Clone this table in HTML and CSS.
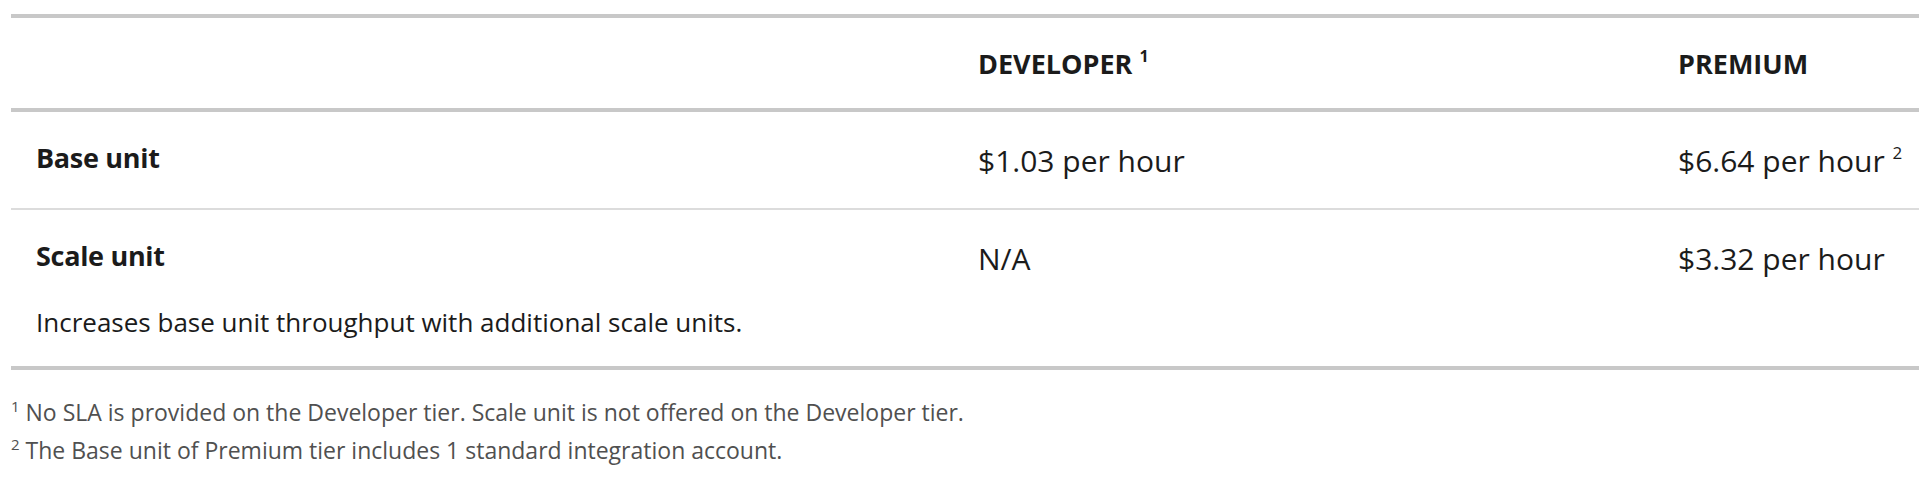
FILE: index.html
```html
<!DOCTYPE html>
<html lang="en">
<head>
<meta charset="utf-8">
<title>Pricing</title>
<link rel="stylesheet" href="styles.css">
</head>
<body>
<div class="pricing">
  <div class="row head">
    <div class="cell label"></div>
    <div class="cell tier">DEVELOPER <sup class="fn">1</sup></div>
    <div class="cell tier">PREMIUM</div>
  </div>
  <div class="row body-row thin">
    <div class="cell label"><div class="name">Base unit</div></div>
    <div class="cell value">$1.03 per hour</div>
    <div class="cell value">$6.64 per hour <sup class="fn-v">2</sup></div>
  </div>
  <div class="row body-row">
    <div class="cell label">
      <div class="name">Scale unit</div>
      <div class="desc">Increases base unit throughput with additional scale units.</div>
    </div>
    <div class="cell value">N/A</div>
    <div class="cell value">$3.32 per hour</div>
  </div>
</div>
<div class="notes">
  <p class="note"><sup>1</sup> No SLA is provided on the Developer tier. Scale unit is not offered on the Developer tier.</p>
  <p class="note"><sup>2</sup> The Base unit of Premium tier includes 1 standard integration account.</p>
</div>
</body>
</html>
```

FILE: styles.css
```css
html, body {
  margin: 0;
  padding: 0;
  background: #ffffff;
}
body {
  font-family: "Open Sans", "Noto Sans", "Liberation Sans", sans-serif;
  color: #1b1b1b;
}
.pricing {
  margin: 14px 0 0 11px;
  border-top: 4px solid #c8c8c8;
  border-bottom: 4px solid #c8c8c8;
}
.row {
  display: grid;
  grid-template-columns: 955px 700px 1fr;
}
.head {
  border-bottom: 4px solid #c8c8c8;
  height: 90px;
}
.thin {
  border-bottom: 2px solid #dcdcdc;
  height: 96px;
}
.cell {
  box-sizing: border-box;
  white-space: nowrap;
}
.label {
  padding-left: 25px;
}
.tier {
  padding: 28px 12px 0;
  font-size: 27px;
  line-height: 36px;
  font-weight: 700;
}
.fn {
  font-size: 16px;
  font-weight: 700;
  vertical-align: 0;
  position: relative;
  top: -12px;
}
.name {
  padding-top: 28px;
  font-size: 27px;
  line-height: 36px;
  font-weight: 700;
  letter-spacing: -0.3px;
}
.desc {
  margin-top: 31px;
  padding-bottom: 27px;
  font-size: 26px;
  line-height: 34px;
}
.value {
  padding: 29px 12px 0;
  font-size: 30px;
  line-height: 40px;
}
.fn-v {
  font-size: 17px;
  vertical-align: 0;
  position: relative;
  top: -13px;
}
.notes {
  margin: 25px 0 0 11px;
  color: #505050;
}
.note {
  margin: 0;
  font-size: 23px;
  line-height: 35px;
}
.note sup {
  font-size: 15px;
  vertical-align: 0;
  position: relative;
  top: -9px;
}
```
